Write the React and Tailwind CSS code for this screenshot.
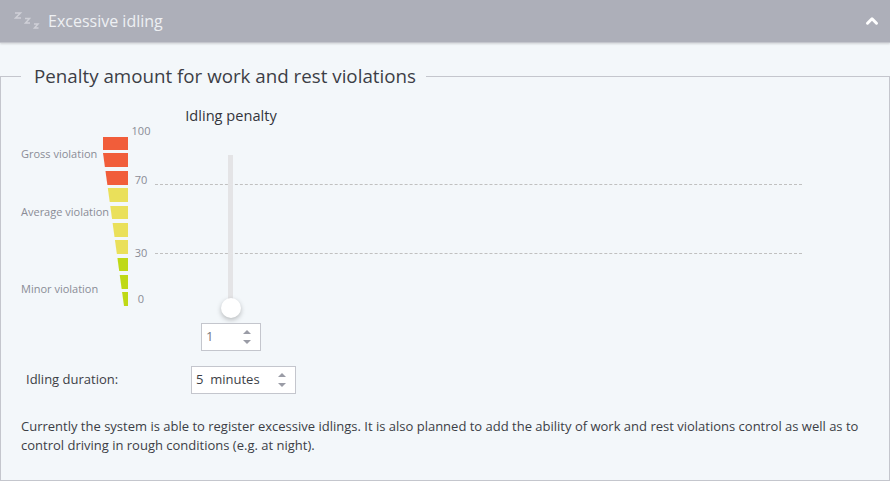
import { ChevronUp } from 'lucide-react';

const segments = [
  { top: 137, bottom: 150, color: '#f15d3a' },
  { top: 153, bottom: 167, color: '#f15d3a' },
  { top: 171, bottom: 185, color: '#f15d3a' },
  { top: 188, bottom: 202, color: '#eae05a' },
  { top: 206, bottom: 219, color: '#eae05a' },
  { top: 223, bottom: 237, color: '#eae05a' },
  { top: 240, bottom: 254, color: '#eae05a' },
  { top: 258, bottom: 271, color: '#bfd916' },
  { top: 275, bottom: 289, color: '#bfd916' },
  { top: 292, bottom: 306, color: '#bfd916' },
];

function Wedge() {
  const edge = (y) => Math.max(0, (y - 153) * (21 / 153));
  return (
    <svg width="25" height="169" viewBox="0 137 25 169" className="block shrink-0 mt-[31px]">
      {segments.map((s) => (
        <polygon key={s.top} fill={s.color} points={`${edge(s.top)},${s.top} 25,${s.top} 25,${s.bottom} ${edge(s.bottom)},${s.bottom}`} />
      ))}
    </svg>
  );
}

function SleepIcon() {
  return (
    <svg width="26" height="20" viewBox="0 0 26 20" fill="none" stroke="#cfd0d7" strokeWidth="1.5" className="block">
      <path d="M1 2h5.5L1.5 7H7" />
      <path d="M11 7.5h4.5l-4 4.500H16" />
      <path d="M20 13h4l-3.500 4H24.500" />
    </svg>
  );
}

function Spinner() {
  return (
    <span className="ml-auto mr-[9px] flex flex-col gap-[6px]">
      <span className="w-0 h-0 border-x-[4px] border-x-transparent border-b-[4px] border-b-[#9a9ca6]" />
      <span className="w-0 h-0 border-x-[4px] border-x-transparent border-t-[4px] border-t-[#9a9ca6]" />
    </span>
  );
}

function Tick({ label }) {
  return <span className="w-[26px] mr-[1px] shrink-0 text-center text-[11px] leading-4 text-[#8a8c96]">{label}</span>;
}

export default function App() {
  return (
    <div className="w-[890px] h-[481px] bg-[#f3f7fa] overflow-hidden font-['Open_Sans',sans-serif]">
      <div className="h-[43px] bg-[#adafb9] border-b border-[#c4c6cd] shadow-[0_1px_2px_rgba(0,0,0,0.15)] flex items-center pl-[14px] pr-[9px]">
        <SleepIcon />
        <span className="ml-[8px] text-[16px] text-[#eef0f3]">Excessive idling</span>
        <ChevronUp size={18} strokeWidth={4} className="ml-auto text-white" />
      </div>

      <fieldset className="mt-[21px] h-[417px] border border-[#c4c6cd] px-5">
        <legend className="pl-[13px] pr-[10px] pb-[1px] text-[18.75px] leading-[24px] text-[#3c3e46]">Penalty amount for work and rest violations</legend>

        <div className="flex items-start pt-[17px]">
          <div className="w-[82px] shrink-0 flex flex-col pt-[40px] text-[11px] leading-4 whitespace-nowrap text-[#8a8c96]">
            <span>Gross violation</span>
            <span className="mt-[42px]">Average violation</span>
            <span className="mt-[61px]">Minor violation</span>
          </div>
          <Wedge />

          <div className="grid w-[674px]">
            <div className="col-start-1 row-start-1 flex flex-col pt-[17px]">
              <Tick label="100" />
              <div className="mt-[33px] flex items-start">
                <Tick label="70" />
                <div className="mt-[12px] flex-1 border-t border-dashed border-[#c0c0c0]" />
              </div>
              <div className="mt-[57px] flex items-center">
                <Tick label="30" />
                <div className="flex-1 border-t border-dashed border-[#c0c0c0]" />
              </div>
              <div className="mt-[30px] flex">
                <Tick label="0" />
              </div>
            </div>

            <div className="col-start-1 row-start-1 ml-[57px] w-[92px] flex flex-col items-center">
              <span className="pb-[1px] text-[14.6px] leading-[19px] font-medium whitespace-nowrap text-[#33353c]">Idling penalty</span>
              <div className="mt-[29px] mr-[1px] h-[155px] w-[5px] bg-[#e4e4e6]" />
              <div className="-mt-[12px] size-5 rounded-full bg-white shadow-[0_2px_5px_rgba(0,0,0,0.25)]" />
              <div className="mt-[5px] w-[60px] h-[28px] bg-white border border-[#c4c6cd] flex items-center pl-[4px] text-[13px] text-[#77797f]">
                1
                <Spinner />
              </div>
            </div>
          </div>
        </div>

        <div className="flex items-center mt-[15px]">
          <span className="ml-[5px] w-[165px] text-[13px] text-[#3c3e46]">Idling duration:</span>
          <div className="w-[105px] h-[28px] bg-white border border-[#c4c6cd] flex items-center pl-[4px] text-[13px] text-[#3c3e46]">
            <span className="whitespace-pre">5  minutes</span>
            <Spinner />
          </div>
        </div>

        <p className="mt-[23px] text-[13px] leading-[19px] text-[#3c3e46]">
          Currently the system is able to register excessive idlings. It is also planned to add the ability of work and rest violations control as well as to control driving in rough conditions (e.g. at night).
        </p>
      </fieldset>
    </div>
  );
}
